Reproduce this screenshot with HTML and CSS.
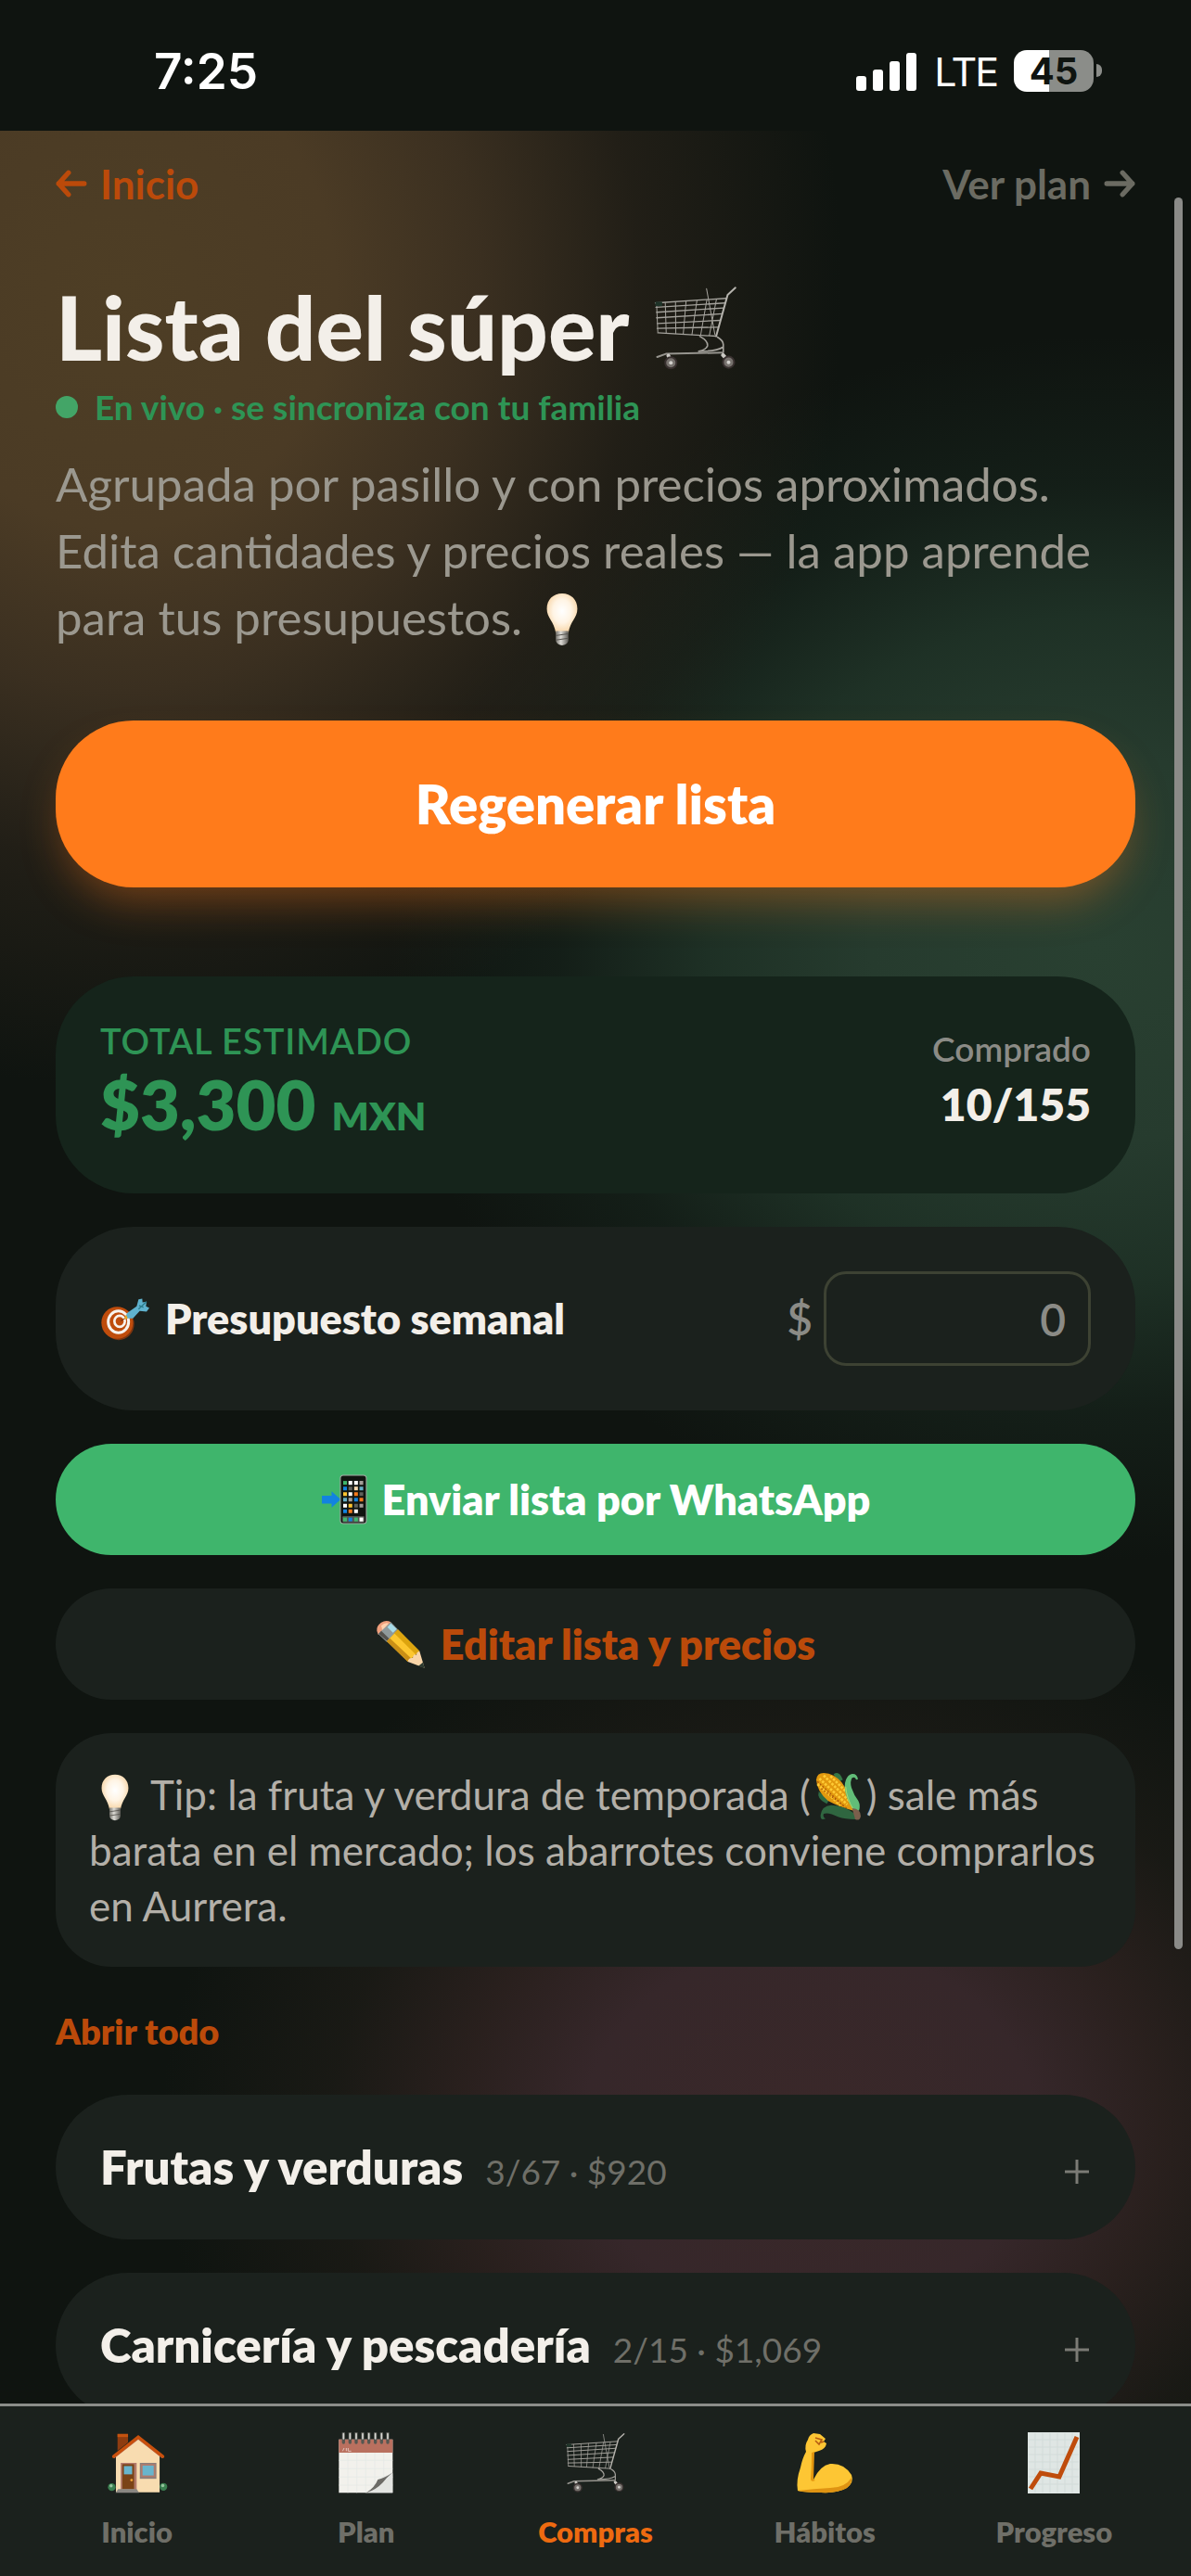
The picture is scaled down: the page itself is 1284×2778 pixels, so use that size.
FILE: index.html
```html
<!DOCTYPE html>
<html lang="es">
<head>
    <meta charset="UTF-8">
    <meta name="viewport" content="width=device-width, initial-scale=1.0">
    <title>Lista del súper</title>
    <link rel="stylesheet" href="styles.css">
</head>
<body>
    <!-- shared icons -->
    <svg class="sprite" aria-hidden="true">
        <defs>
            <radialGradient id="glass" cx="50%" cy="45%" r="60%">
                <stop offset="0" stop-color="#ffffff"/>
                <stop offset="0.5" stop-color="#fff4e4"/>
                <stop offset="1" stop-color="#f6cf9b"/>
            </radialGradient>
            <linearGradient id="screw" x1="0" x2="1">
                <stop offset="0" stop-color="#77756f"/>
                <stop offset="0.4" stop-color="#dcdad5"/>
                <stop offset="1" stop-color="#5d5b56"/>
            </linearGradient>
        </defs>
        <symbol id="cart" viewBox="42 50 268 275">
            <g fill="none" stroke="#a5a39d" stroke-width="4" stroke-linecap="round" stroke-linejoin="round">
                <path d="M46 106 L274 91 M48 120 L270 106 M50 136 L266 122 M50 154 L261 141 M52 172 L255 162 M52 188 L249 184 M54 202 L242 213"/>
                <path d="M50 108 L54 200 M78 105 L81 202 M111 103 L112 205 M145 101 L136 206 M180 98 L164 208 M212 96 L192 210 M243 94 L220 211 M211 60 L238 208" stroke-width="3"/>
                <path d="M304 57 L279 80 L242 213" stroke-width="6" stroke="#b5b3ad"/>
                <path d="M190 214 Q216 228 214 244 Q210 256 186 262 M246 216 Q264 226 265 240 V264 M186 262 Q244 262 264 248" stroke-width="5"/>
                <path d="M52 280 L80 270 L264 266" stroke-width="6" stroke="#96948e"/>
                <path d="M88 276 L98 296 M264 274 L282 294" stroke-width="12" stroke="#cbc9c4"/>
            </g>
            <path d="M46 102 h22 v14 h-22 z" fill="#1e3328"/>
            <g fill="#77726e" stroke="#38302f" stroke-width="6">
                <circle cx="96" cy="299" r="18"/>
                <circle cx="282" cy="297" r="18"/>
            </g>
            <circle cx="96" cy="299" r="6" fill="#d2d0cc"/>
            <circle cx="282" cy="297" r="6" fill="#d2d0cc"/>
        </symbol>
        <symbol id="bulb" viewBox="0 0 36 60">
            <path d="M18 1 C28 1 35 8 35 18 C35 28 27 32 25 45 H11 C9 32 1 28 1 18 C1 8 8 1 18 1 Z" fill="url(#glass)"/>
            <path d="M11 43 H25 V53 Q25 58 18 59 Q11 58 11 53 Z" fill="url(#screw)"/>
            <path d="M11 48 L25 46 M11 53 L25 51" stroke="#55534e" stroke-width="1"/>
        </symbol>
    </svg>

    <div class="app">
        <header class="status">
            <span class="time">7:25</span>
            <div class="status-right">
                <svg class="signal" viewBox="0 0 66 42" aria-hidden="true">
                    <g fill="#fff">
                        <rect x="0" y="26" width="11" height="16" rx="3"/>
                        <rect x="18" y="19" width="11" height="23" rx="3"/>
                        <rect x="36" y="10" width="11" height="32" rx="3"/>
                        <rect x="54" y="1" width="11" height="41" rx="3"/>
                    </g>
                </svg>
                <span class="lte">LTE</span>
                <span class="battery">45</span>
            </div>
        </header>

        <main class="content">
            <nav class="top-links">
                <a href="#inicio" class="back">
                    <svg class="arrow" viewBox="0 0 32 30" aria-hidden="true"><path d="M29 15 H3 M13 4 L3 15 L13 26"/></svg>
                    Inicio
                </a>
                <a href="#plan" class="forward">
                    Ver plan
                    <svg class="arrow" viewBox="0 0 32 30" aria-hidden="true"><path d="M3 15 H29 M19 4 L29 15 L19 26"/></svg>
                </a>
            </nav>

            <h1>Lista del súper <svg class="title-cart" aria-hidden="true"><use href="#cart"/></svg></h1>
            <p class="live"><span class="dot"></span>En vivo · se sincroniza con tu familia</p>
            <p class="intro">Agrupada por pasillo y con precios aproximados. Edita cantidades y precios reales — la app aprende para tus presupuestos. <svg class="bulb" aria-hidden="true"><use href="#bulb"/></svg></p>

            <button class="btn-primary">Regenerar lista</button>

            <section class="stack">
                <div class="card total">
                    <div>
                        <div class="total-label">TOTAL ESTIMADO</div>
                        <div class="total-value">$3,300 <small>MXN</small></div>
                    </div>
                    <div class="bought">
                        <div class="bought-label">Comprado</div>
                        <div class="bought-value">10/155</div>
                    </div>
                </div>

                <div class="card budget">
                    <label for="budget">
                        <svg class="target" viewBox="62 66 162 140" aria-hidden="true">
                            <ellipse cx="122" cy="152" rx="50" ry="52" fill="#7c3510"/>
                            <ellipse cx="117" cy="148" rx="51" ry="52" fill="#bf4c0c"/>
                            <ellipse cx="121" cy="145" rx="33" ry="35" fill="none" stroke="#f7f3ee" stroke-width="9"/>
                            <ellipse cx="125" cy="143" rx="17" ry="18" fill="none" stroke="#f7f3ee" stroke-width="8"/>
                            <path d="M128 142 L152 128" stroke="#6b3113" stroke-width="3"/>
                            <path d="M140 134 L150 116 L180 95 L186 72 L198 70 L199 82 L212 80 L210 95 L221 100 L212 112 L190 110 L168 134 Z" fill="#5fb2ce"/>
                            <path d="M186 104 L212 80 M188 92 L202 98" stroke="#2b7c8c" stroke-width="4"/>
                            <path d="M139 136 L146 122 L151 134 Z" fill="#f2a518"/>
                        </svg>
                        Presupuesto semanal
                    </label>
                    <div class="money">
                        <span>$</span>
                        <input id="budget" type="text" inputmode="numeric" placeholder="0">
                    </div>
                </div>

                <button class="btn-pill whatsapp">
                    <svg class="phone" viewBox="76 62 146 160" aria-hidden="true">
                        <path d="M78 130 H109 V116 L138 142 L109 168 V155 H78 Z" fill="#1283e0"/>
                        <rect x="137" y="65" width="83" height="154" rx="9" fill="#101410" stroke="#a5a8a4" stroke-width="3"/>
                        <rect x="143" y="195" width="71" height="20" rx="4" fill="#51544f"/>
                        <g stroke-width="12" fill="none">
                            <path d="M152 83 v12" stroke="#3fb56c"/>
                            <path d="M152 101 v12 M187 137 v12 M152 174 v12" stroke="#1283e0"/>
                            <path d="M152 119 v12 M169 156 v12" stroke="#fdc431"/>
                            <path d="M152 137 v12 M204 101 v12" stroke="#64afc6"/>
                            <path d="M169 83 v12 M187 83 v12 M169 119 v12 M152 156 v12 M187 174 v12 M204 200 v12" stroke="#fff"/>
                            <path d="M187 101 v12" stroke="#f6d9ae"/>
                            <path d="M187 119 v12 M169 174 v12 M204 137 v12" stroke="#f57a1d"/>
                            <path d="M204 83 v12 M169 137 v12 M204 156 v12" stroke="#a29d98"/>
                            <path d="M169 101 v12 M204 119 v12 M187 156 v12" stroke="#5f615b"/>
                            <path d="M152 200 v12 M187 200 v12" stroke="#3fb56c"/>
                            <path d="M169 200 v12" stroke="#1283e0"/>
                        </g>
                    </svg>
                    Enviar lista por WhatsApp
                </button>

                <button class="btn-pill edit">
                    <svg class="pencil" viewBox="258 530 162 162" aria-hidden="true">
                        <path d="M262 568 Q260 552 276 541 Q292 531 307 540 L281 578 L266 580 Z" fill="#ef9f7c"/>
                        <path d="M276 552 Q288 540 300 544 L280 568 Z" fill="#ffd0ac"/>
                        <path d="M307 540 L330 564 L294 604 L266 578 Z" fill="#8f9a9c"/>
                        <path d="M307 544 L326 562 L314 574 L296 556 Z" fill="#a8dbe8"/>
                        <path d="M268 578 L282 590 L296 602 L302 594 L276 568 Z" fill="#55534f"/>
                        <path d="M330 564 L400 634 L362 668 L294 602 Z" fill="#fdc72f"/>
                        <path d="M330 564 L400 634 L388 645 L318 576 Z" fill="#dca40f"/>
                        <path d="M294 602 L304 592 L374 658 L362 668 Z" fill="#c98f16"/>
                        <path d="M400 634 L416 688 L362 668 Q364 654 378 656 Q380 642 390 646 Q390 636 400 634 Z" fill="#f9d5a8"/>
                        <path d="M411 670 L416 689 L396 682 Z" fill="#2d3a30"/>
                    </svg>
                    Editar lista y precios
                </button>

                <p class="tip"><svg class="bulb" aria-hidden="true"><use href="#bulb"/></svg> Tip: la fruta y verdura de temporada (<svg class="corn" viewBox="36 38 156 162" aria-hidden="true">
                        <path d="M98 48 Q116 34 128 66 L112 74 Z" fill="#367746"/>
                        <path d="M50 104 Q42 128 76 144 L84 130 Z" fill="#2e6a43"/>
                        <path d="M42 66 Q44 44 66 44 Q100 46 124 74 Q150 108 164 166 Q120 156 80 134 Q44 104 42 66 Z" fill="#e2990f"/>
                        <path d="M52 62 L142 146 M66 52 L150 136 M46 80 L120 148 M88 54 L140 106" stroke="#ffcb35" stroke-width="8" stroke-dasharray="8 4"/>
                        <path d="M58 94 L140 158 M46 72 L130 150" stroke="#ad5509" stroke-width="4" stroke-dasharray="5 6"/>
                        <path d="M138 66 Q144 50 158 47 Q174 46 177 64 L171 66 Q168 54 158 60 Q150 72 156 92 Q164 116 178 134 Q186 150 180 166 L160 162 Q136 124 134 90 Q134 76 138 66 Z" fill="#62bd78"/>
                        <path d="M137 88 Q140 126 162 162" stroke="#a8d86e" stroke-width="3" fill="none"/>
                        <path d="M72 192 Q54 200 56 180 Q60 150 90 148 Q132 148 170 178 L182 194 Q140 196 112 186 Q82 170 66 176 Q62 186 72 192 Z" fill="#2f6640"/>
                        <path d="M158 158 Q186 160 186 184 Q182 200 168 194 Z" fill="#7b5f4c"/>
                    </svg>) sale más barata en el mercado; los abarrotes conviene comprarlos en Aurrera.</p>
            </section>

            <button class="open-all">Abrir todo</button>

            <section class="stack">
                <button class="group" aria-expanded="false">
                    <span class="group-name">Frutas y verduras</span>
                    <span class="group-count">3/67 · $920</span>
                    <svg class="plus" viewBox="0 0 28 28" aria-hidden="true"><path d="M14 1 V27 M1 14 H27"/></svg>
                </button>
                <button class="group" aria-expanded="false">
                    <span class="group-name">Carnicería y pescadería</span>
                    <span class="group-count">2/15 · $1,069</span>
                    <svg class="plus" viewBox="0 0 28 28" aria-hidden="true"><path d="M14 1 V27 M1 14 H27"/></svg>
                </button>
            </section>
        </main>

        <nav class="tabs">
            <a href="#inicio">
                <svg viewBox="104 78 192 192" aria-hidden="true">
                    <path d="M138 84 H171 V110 L138 136 Z" fill="#8e3c10"/>
                    <rect x="138" y="83" width="33" height="10" fill="#c4520f"/>
                    <path d="M133 150 L203 98 L270 150 V266 H133 Z" fill="#f8dcb0"/>
                    <path d="M126 156 L203 96 L280 156" fill="none" stroke="#b3776a" stroke-width="8"/>
                    <path d="M126 154 L203 93 L280 154" fill="none" stroke="#c9500d" stroke-width="10" stroke-linecap="round"/>
                    <rect x="148" y="174" width="50" height="84" fill="#b17a6b"/>
                    <rect x="153" y="178" width="37" height="78" fill="#7b4317"/>
                    <rect x="158" y="184" width="26" height="26" fill="#68b5cd"/>
                    <circle cx="182" cy="228" r="4" fill="#f2a53a"/>
                    <rect x="208" y="174" width="52" height="50" fill="#8c807b"/>
                    <rect x="214" y="180" width="40" height="36" fill="#68b5cd" stroke="#b17a6b" stroke-width="5"/>
                    <path d="M140 256 H198 L206 268 H132 Z" fill="#8a8782"/>
                    <circle cx="120" cy="250" r="12" fill="#3b7f50"/>
                    <circle cx="282" cy="249" r="12" fill="#3b7f50"/>
                    <circle cx="118" cy="246" r="5" fill="#94c49c"/>
                    <circle cx="280" cy="245" r="5" fill="#94c49c"/>
                </svg>
                Inicio
            </a>
            <a href="#plan">
                <svg viewBox="846 75 198 198" aria-hidden="true">
                    <path d="M856 98 H1030 V271 H856 Z" fill="#f2f1ec"/>
                    <path d="M856 98 H1030 V141 H856 Z" fill="#b9705f"/>
                    <path d="M868 136 l5 -10 M880 126 v10 M886 126 v10 h10" stroke="#e4c3bb" stroke-width="3" fill="none"/>
                    <path d="M856 166 H1030 M856 193 H1030 M856 220 H1030 M856 246 H1030 M885 141 V271 M914 141 V271 M943 141 V271 M972 141 V250 M1001 141 V220" stroke="#e4e8e6" stroke-width="2"/>
                    <path d="M944 271 Q980 254 990 226 Q1008 213 1030 208 V271 Z" fill="#e4e5e2"/>
                    <path d="M944 271 Q972 254 982 228 Q1008 222 1030 205 Q1010 222 998 238 Q976 262 944 271 Z" fill="#6d6b67"/>
                    <path d="M871 78 v30 M892 78 v30 M912 78 v30 M933 78 v30 M953 78 v30 M974 78 v30 M994 78 v30 M1014 78 v30" stroke="#555751" stroke-width="10" stroke-linecap="round"/>
                    <path d="M871 80 v16 M892 80 v16 M912 80 v16 M933 80 v16 M953 80 v16 M974 80 v16 M994 80 v16 M1014 80 v16" stroke="#d8d8d3" stroke-width="5" stroke-linecap="round"/>
                </svg>
                Plan
            </a>
            <a href="#compras" class="active">
                <svg class="tab-cart" aria-hidden="true"><use href="#cart"/></svg>
                Compras
            </a>
            <a href="#habitos">
                <svg viewBox="0 0 64 66" aria-hidden="true">
                    <path d="M20 1 L27 2 L33 7 L31 10 L34 12 Q33 18 26 20 L20 22 L20 51 Q27 36 38 34 Q53 33 61 46 Q64 54 56 60 Q46 66 28 65 Q12 65 3 63 Q1 52 6 38 Q8 28 12 21 Q10 14 14 8 Q15 3 20 1 Z" fill="#fdc634"/>
                    <path d="M3 63 Q12 65 28 65 Q46 66 56 60 Q62 55 61 49 Q54 60 38 60 Q20 61 3 63 Z" fill="#df9312"/>
                    <path d="M18 22 Q18 40 17 50 Q17 54 22 52 L20 51 L21 21 Z" fill="#e3960f"/>
                    <path d="M22 6 L29 8 L26 13 L22 9 M31 10 L28 11" fill="none" stroke="#b55a12" stroke-width="1.5"/>
                </svg>
                Hábitos
            </a>
            <a href="#progreso">
                <svg viewBox="-4 0 64 66" aria-hidden="true">
                    <rect x="0" y="0" width="56" height="66" fill="#dfe6e4"/>
                    <path d="M8 1 V65 M16 1 V65 M24 1 V65 M32 1 V65 M40 1 V65 M48 1 V65 M1 8 H55 M1 16 H55 M1 24 H55 M1 32 H55 M1 40 H55 M1 48 H55 M1 56 H55" stroke="#d2dbd9" stroke-width="1"/>
                    <path d="M3 61 L14 44 L34 48 L53 5" fill="none" stroke="#bf4c0c" stroke-width="5"/>
                </svg>
                Progreso
            </a>
        </nav>

        <div class="scroll-thumb"></div>
    </div>
</body>
</html>
```
FILE: styles.css
```css
* {
    box-sizing: border-box;
}
body {
    margin: 0;
    background-color: #0f1410;
    color: #f3efe9;
    font-family: Lato, "Liberation Sans", sans-serif;
    font-size: 44px;
    line-height: 60px;
}
h1, p {
    margin: 0;
}
a {
    color: inherit;
    text-decoration: none;
}
button, input {
    font: inherit;
    color: inherit;
    border: none;
}
button {
    cursor: pointer;
}
.sprite {
    position: absolute;
    width: 0;
    height: 0;
}
.app {
    position: relative;
    display: flex;
    flex-direction: column;
    height: 100vh;
    overflow: hidden;
}

/* status bar */
.status {
    display: flex;
    flex: none;
    justify-content: space-between;
    align-items: center;
    height: 141px;
    padding: 12px 96px 0 166px;
    font-family: Inter, "Liberation Sans", sans-serif;
    color: #fff;
}
.time {
    font-size: 53px;
    font-weight: 600;
}
.status-right {
    display: flex;
    align-items: center;
    gap: 18px;
}
.signal {
    width: 66px;
    height: 42px;
}
.lte {
    font-size: 43px;
    letter-spacing: -2px;
}
.battery {
    position: relative;
    width: 86px;
    height: 45px;
    margin-right: 9px;
    border-radius: 14px;
    background: linear-gradient(90deg, #fff 44%, #8b8d89 44%);
    color: #0f1410;
    font-size: 40px;
    font-weight: 700;
    line-height: 45px;
    text-align: center;
}
.battery::after {
    content: "";
    position: absolute;
    top: 15px;
    right: -9px;
    width: 6px;
    height: 14px;
    border-radius: 0 6px 6px 0;
    background: #8b8d89;
}

/* page */
.content {
    flex: 1;
    min-height: 0;
    overflow: hidden;
    padding: 27px 60px 0;
    background:
        radial-gradient(780px 860px at 10% 7%, #4e3e25 0%, #4b3b25 30%, rgba(66, 52, 35, 0.85) 50%, rgba(45, 37, 27, 0.6) 72%, rgba(15, 20, 16, 0) 100%),
        radial-gradient(760px 660px at 92% 36%, #294031 0%, #263b2e 32%, rgba(32, 52, 40, 0.9) 54%, rgba(23, 37, 29, 0.6) 76%, rgba(15, 20, 16, 0) 100%),
        radial-gradient(700px 580px at 68% 88%, #3a2829 0%, #36272a 35%, rgba(46, 34, 32, 0.85) 54%, rgba(32, 29, 24, 0.6) 74%, rgba(15, 20, 16, 0) 100%),
        #0f1410;
}
.top-links {
    display: flex;
    justify-content: space-between;
    font-weight: 700;
}
.top-links a {
    display: flex;
    align-items: center;
    gap: 14px;
}
.back {
    color: #bb4a0a;
}
.forward {
    color: #6b6b62;
}
.arrow {
    width: 34px;
    height: 32px;
    fill: none;
    stroke: currentColor;
    stroke-width: 5;
    stroke-linecap: round;
    stroke-linejoin: round;
}
h1 {
    margin-top: 68px;
    font-size: 96px;
    font-weight: 900;
    line-height: 112px;
}
.title-cart {
    width: 90px;
    height: 92px;
    margin-left: 6px;
    vertical-align: -11px;
}
.live {
    display: flex;
    align-items: center;
    gap: 18px;
    margin-top: 4px;
    color: #2e9455;
    font-size: 37px;
    font-weight: 700;
    line-height: 54px;
}
.dot {
    width: 24px;
    height: 24px;
    border-radius: 50%;
    background: #43a567;
}
.intro {
    margin-top: 20px;
    color: #9b988f;
    font-size: 51px;
    line-height: 72px;
}
.bulb {
    width: 36px;
    height: 58px;
    margin: 0 12px;
    vertical-align: -12px;
}

/* buttons */
.btn-primary {
    display: block;
    width: 100%;
    height: 180px;
    margin: 75px 0 96px;
    border-radius: 84px;
    background: #ff7b1b;
    box-shadow: 0 24px 48px -12px rgba(255, 123, 27, 0.4);
    color: #fff;
    font-size: 58px;
    font-weight: 800;
}
.btn-pill {
    display: flex;
    justify-content: center;
    align-items: center;
    gap: 16px;
    height: 120px;
    border-radius: 60px;
    font-size: 45px;
    font-weight: 800;
}
.whatsapp {
    background: #3fb56c;
    color: #fff;
}
.edit {
    background: #1b211d;
    color: #bb4a0a;
}
.phone {
    width: 50px;
    height: 54px;
}
.pencil {
    width: 54px;
    height: 54px;
}

/* cards */
.stack {
    display: flex;
    flex-direction: column;
    gap: 36px;
}
.card {
    display: flex;
    justify-content: space-between;
    padding: 48px;
    border-radius: 84px;
    background: #1b211d;
}
.total {
    background: #15241b;
}
.total-label {
    color: #2e9455;
    font-size: 38px;
    font-weight: 600;
    line-height: 42px;
    letter-spacing: 1px;
}
.total-value {
    color: #2e9455;
    font-size: 74px;
    font-weight: 800;
    line-height: 96px;
}
.total-value small {
    font-size: 42px;
    line-height: 42px;
}
.bought {
    text-align: right;
}
.bought-label {
    color: #8b8b86;
    font-size: 37px;
    font-weight: 600;
}
.bought-value {
    font-size: 48px;
    font-weight: 800;
}
.budget {
    align-items: center;
}
.budget label {
    display: flex;
    align-items: center;
    gap: 16px;
    font-size: 45px;
    font-weight: 800;
}
.target {
    width: 54px;
    height: 47px;
}
.money {
    display: flex;
    align-items: center;
    gap: 12px;
    color: #8b8b86;
    font-size: 48px;
    font-weight: 600;
}
.money input {
    width: 288px;
    height: 102px;
    padding: 0 24px;
    border: 3px solid #3d4233;
    border-radius: 24px;
    background: transparent;
    text-align: right;
}
.money input::placeholder {
    color: #8b8b86;
}
.tip {
    padding: 36px;
    border-radius: 60px;
    background: #1b211d;
    color: #b3afa8;
}
.tip .bulb {
    width: 32px;
    height: 51px;
}
.corn {
    width: 52px;
    height: 54px;
    margin: 0 4px;
    vertical-align: -12px;
}

/* groups */
.open-all {
    display: block;
    margin: 42px 0;
    padding: 0;
    background: none;
    color: #bb4a0a;
    font-size: 38px;
    font-weight: 800;
    line-height: 54px;
}
.group {
    display: flex;
    align-items: baseline;
    gap: 24px;
    padding: 48px;
    border-radius: 78px;
    background: #1b211d;
    text-align: left;
}
.group-name {
    font-size: 51px;
    font-weight: 800;
}
.group-count {
    flex: 1;
    color: #6f6f68;
    font-size: 37px;
    line-height: 42px;
}
.plus {
    width: 30px;
    height: 28px;
    stroke: #7b7b75;
    stroke-width: 3;
}

/* bottom tabs */
.tabs {
    display: grid;
    grid-template-columns: repeat(5, 1fr);
    flex: none;
    height: 186px;
    padding: 28px 24px 0;
    border-top: 3px solid #8b8d89;
    background: #1b211d;
}
.tabs a {
    display: flex;
    flex-direction: column;
    align-items: center;
    gap: 20px;
    color: #6f6f68;
    font-size: 31px;
    font-weight: 800;
    line-height: 42px;
}
.tabs .active {
    color: #ee6a10;
}
.tabs svg {
    width: 66px;
    height: 66px;
}
.tabs .tab-cart {
    width: 72px;
}

.scroll-thumb {
    position: absolute;
    top: 213px;
    right: 9px;
    width: 9px;
    height: 68%;
    border-radius: 5px;
    background: #8b8b88;
}
```
